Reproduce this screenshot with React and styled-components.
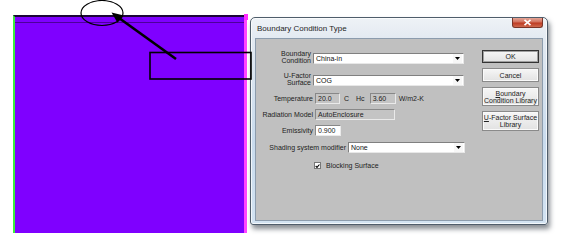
import { createGlobalStyle, styled } from "styled-components";

const GlobalStyle = createGlobalStyle`
  html, body {
    margin: 0;
    padding: 0;
    background: #ffffff;
  }
  body {
    font-family: "Liberation Sans", Arial, sans-serif;
    color: #1a1a1a;
  }
`;

export default function App() {
  return (
    <Stage>
      <GlobalStyle />
      <Canvas />
      <Window>
        <TitleBar>
          <TitleText>Boundary Condition Type</TitleText>
          <CloseButton>
            <svg width="9" height="7" viewBox="0 0 9 7">
              <path d="M1.5 0.8 L7.5 6.2 M7.5 0.8 L1.5 6.2" stroke="#fff" strokeWidth="1.6" />
            </svg>
          </CloseButton>
        </TitleBar>
        <Client>
          <Form>
            <Row $top={11} $h={14}>
              <Label $w={51}>
                Boundary
                <br />
                Condition
              </Label>
              <Combo $w={151}>
                <span>China-in</span>
                <DropArrow />
              </Combo>
            </Row>
            <Row $top={8} $h={14}>
              <Label $w={51}>
                U-Factor
                <br />
                Surface
              </Label>
              <Combo $w={151}>
                <span>COG</span>
                <DropArrow />
              </Combo>
            </Row>
            <Row $top={7} $h={11} $center>
              <Label $w={53}>Temperature</Label>
              <Field $w={25} $readOnly>20.0</Field>
              <Unit $gap={4}>C</Unit>
              <Unit $gap={7}>Hc</Unit>
              <Field $w={26} $readOnly $ml={5}>3.60</Field>
              <Unit $gap={3}>W/m2-K</Unit>
            </Row>
            <Row $top={5} $h={11} $center>
              <Label $w={53}>Radiation Model</Label>
              <Field $w={80} $readOnly>AutoEnclosure</Field>
            </Row>
            <Row $top={5} $h={11} $center>
              <Label $w={53}>Emissivity</Label>
              <Field $w={26}>0.900</Field>
            </Row>
            <Row $top={6} $h={11} $center>
              <Label $w={86}>Shading system modifier</Label>
              <Combo $w={117}>
                <span>None</span>
                <DropArrow />
              </Combo>
            </Row>
            <Row $top={8} $h={9} $center>
              <Spacer $w={54} />
              <CheckBox>
                <svg width="6" height="6" viewBox="0 0 6 6">
                  <path d="M0.8 3 L2.4 4.6 L5.3 1.2" stroke="#000" strokeWidth="1.3" fill="none" />
                </svg>
              </CheckBox>
              <CheckLabel>Blocking Surface</CheckLabel>
            </Row>
          </Form>
          <Buttons>
            <Button $h={13} $default>
              <span>OK</span>
            </Button>
            <Button $h={14}>
              <span>Cancel</span>
            </Button>
            <Button $h={19}>
              <span>
                <u>B</u>oundary
                <br />
                Condition Library
              </span>
            </Button>
            <Button $h={20}>
              <span>
                <u>U</u>-Factor Surface
                <br />
                Library
              </span>
            </Button>
          </Buttons>
        </Client>
      </Window>
      <Annotations width="568" height="246" viewBox="0 0 568 246">
        <ellipse cx="102" cy="13" rx="21" ry="12.5" fill="none" stroke="#000" strokeWidth="1.2" />
        <line x1="176" y1="59" x2="119" y2="18" stroke="#000" strokeWidth="2.6" />
        <polygon points="111.5,12.5 123,15.2 117.5,22.8" fill="#000" />
        <rect x="150" y="52.5" width="101" height="26.5" fill="none" stroke="#000" strokeWidth="1.6" />
      </Annotations>
    </Stage>
  );
}

function DropArrow() {
  return (
    <ArrowBox>
      <svg width="5" height="3" viewBox="0 0 5 3">
        <polygon points="0,0 5,0 2.5,3" fill="#000" />
      </svg>
    </ArrowBox>
  );
}

const Stage = styled.div`
  position: relative;
  width: 568px;
  height: 246px;
  display: flex;
  align-items: flex-start;
  overflow: hidden;
`;

const Canvas = styled.div`
  position: relative;
  margin: 15px 0 0 13px;
  width: 229px;
  height: 216px;
  border-left: 2px solid #3cf03c;
  border-right: 3px solid #ff44ff;
  border-top: 2px solid #1c0638;
  background: linear-gradient(
    to bottom,
    #7f00ff 0 5px,
    #4d0099 5px 6px,
    #7f00ff 6px
  );

  &::before {
    content: "";
    position: absolute;
    right: -4px;
    top: -3px;
    width: 4px;
    height: 6px;
    background: #ff2cff;
  }
`;

const Window = styled.div`
  margin: 17px 0 0 3px;
  width: 296px;
  height: 206px;
  border: 1px solid #4f5d6b;
  border-radius: 5px 5px 3px 3px;
  background: linear-gradient(to bottom, #eef2f6 0, #e2e9f1 22px, #c9dbed 60%, #d3e3f2 100%);
  box-shadow: 2px 4px 5px rgba(40, 50, 60, 0.55), inset 0 0 0 1px rgba(255, 255, 255, 0.7);
  display: flex;
  flex-direction: column;
`;

const TitleBar = styled.div`
  height: 20px;
  display: flex;
  justify-content: space-between;
  align-items: flex-start;
  padding-left: 6px;
`;

const TitleText = styled.div`
  font-family: "Liberation Sans", Arial, sans-serif;
  font-size: 8px;
  line-height: 8px;
  margin-top: 7px;
  color: #1e1e1e;
`;

const CloseButton = styled.div`
  width: 29px;
  height: 9px;
  margin-right: 4px;
  border: 1px solid #7a3427;
  border-top: none;
  border-radius: 0 0 3px 3px;
  background: linear-gradient(to bottom, #e3a597 0, #d2705c 45%, #bd3a22 55%, #cf6a4f 100%);
  display: flex;
  align-items: center;
  justify-content: center;
`;

const Client = styled.div`
  flex: 1;
  margin: 0 4px 3px 4px;
  border: 1px solid #8c9cad;
  background: #c0c0c0;
  display: flex;
`;

const Form = styled.div`
  width: 222px;
  padding-left: 4px;
  display: flex;
  flex-direction: column;
`;

const Row = styled.div`
  margin-top: ${(p) => p.$top}px;
  height: ${(p) => p.$h}px;
  display: flex;
  align-items: ${(p) => (p.$center ? "center" : "flex-end")};
`;

const Label = styled.div`
  width: ${(p) => p.$w}px;
  flex-shrink: 0;
  padding-right: 2px;
  text-align: right;
  font-size: 7px;
  line-height: 7px;
  color: #222;
  white-space: nowrap;
`;

const Spacer = styled.div`
  width: ${(p) => p.$w}px;
  flex-shrink: 0;
`;

const Combo = styled.div`
  width: ${(p) => p.$w}px;
  height: 11px;
  box-sizing: border-box;
  background: #ffffff;
  border: 1px solid #808080;
  border-right-color: #e8e8e8;
  border-bottom-color: #e8e8e8;
  display: flex;
  align-items: center;
  justify-content: space-between;
  font-size: 7px;
  line-height: 7px;
  padding-left: 2px;
  color: #111;
`;

const ArrowBox = styled.div`
  width: 9px;
  height: 9px;
  display: flex;
  align-items: center;
  justify-content: center;
  margin-right: 1px;
  background: #f7f7f7;
`;

const Field = styled.div`
  width: ${(p) => p.$w}px;
  height: 11px;
  margin-left: ${(p) => p.$ml || 0}px;
  box-sizing: border-box;
  background: ${(p) => (p.$readOnly ? "#c4c4c4" : "#ffffff")};
  border: 1px solid #888;
  border-right-color: #eaeaea;
  border-bottom-color: #eaeaea;
  font-size: 7px;
  line-height: 9px;
  padding-left: 2px;
  color: #222;
  white-space: nowrap;
`;

const Unit = styled.span`
  margin-left: ${(p) => p.$gap}px;
  font-size: 7px;
  line-height: 7px;
  color: #222;
`;

const CheckBox = styled.div`
  width: 7px;
  height: 7px;
  box-sizing: border-box;
  background: #fff;
  border: 1px solid #777;
  display: flex;
  align-items: center;
  justify-content: center;
`;

const CheckLabel = styled.span`
  margin-left: 5px;
  font-size: 7px;
  line-height: 7px;
  color: #222;
`;

const Buttons = styled.div`
  width: 57px;
  padding-top: 11px;
  display: flex;
  flex-direction: column;
  gap: 5px;
`;

const Button = styled.div`
  height: ${(p) => p.$h}px;
  box-sizing: border-box;
  background: linear-gradient(to bottom, #f6f6f6, #e2e2e2);
  border: 1px solid ${(p) => (p.$default ? "#333" : "#8a8a8a")};
  box-shadow: ${(p) => (p.$default ? "inset 0 0 0 1px #a0a0a0" : "inset 0 0 0 1px #fafafa")};
  display: flex;
  align-items: center;
  justify-content: center;
  text-align: center;
  font-size: 7px;
  line-height: 7px;
  color: #222;
  white-space: nowrap;

  u {
    text-decoration-thickness: 0.5px;
  }
`;

const Annotations = styled.svg`
  position: absolute;
  left: 0;
  top: 0;
  pointer-events: none;
`;
